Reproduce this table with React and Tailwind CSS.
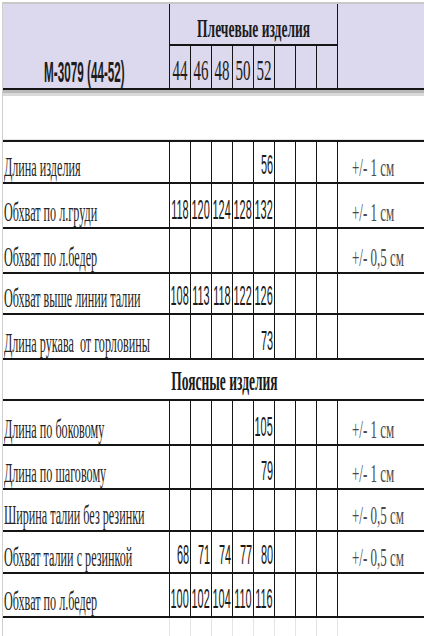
import React from "react";

const LINE = "border-[#151515]";

const rows = [
  { label: "Длина изделия", vals: ["", "", "", "", "56"], tol: "+/- 1 см", h: "h-[42px]" },
  { label: "Обхват по л.груди", vals: ["118", "120", "124", "128", "132"], tol: "+/- 1 см", h: "h-[45px]" },
  { label: "Обхват по л.бедер", vals: [], tol: "+/- 0,5 см", h: "h-[45px]" },
  { label: "Обхват выше линии талии", vals: ["108", "113", "118", "122", "126"], tol: "", h: "h-[41px]" },
  { label: "Длина рукава  от горловины", vals: ["", "", "", "", "73"], tol: "", h: "h-[45px]" },
  { section: "Поясные изделия", h: "h-[41px]" },
  { label: "Длина по боковому", vals: ["", "", "", "", "105"], tol: "+/- 1 см", h: "h-[45px]" },
  { label: "Длина по шаговому", vals: ["", "", "", "", "79"], tol: "+/- 1 см", h: "h-[44px]" },
  { label: "Ширина талии без резинки", vals: [], tol: "+/- 0,5 см", h: "h-[42px]" },
  { label: "Обхват талии с резинкой", vals: ["68", "71", "74", "77", "80"], tol: "+/- 0,5 см", h: "h-[42px]" },
  { label: "Обхват по л.бедер", vals: ["100", "102", "104", "110", "116"], tol: "", h: "h-[44px]" },
];

const cols = [0, 1, 2, 3, 4, 5, 6, 7];

function DataRow({ r }) {
  if (r.section) {
    return (
      <div className={`flex ${r.h} border-b-2 ${LINE} items-end justify-center pl-[22px] pb-[4px]`}>
        <span className="inline-block whitespace-nowrap origin-bottom scale-x-[0.5] text-[27px] leading-none font-bold text-[#1a1a1a] font-['Liberation_Serif','Times_New_Roman',serif]">
          {r.section}
        </span>
      </div>
    );
  }
  return (
    <div className={`flex ${r.h} border-b-2 ${LINE}`}>
      <div className="w-[166px] shrink-0 flex items-end pb-[1px] pl-[1px]">
        <span className="inline-block whitespace-pre origin-bottom-left scale-x-[0.45] text-[27px] leading-none text-[#262626] font-['Liberation_Serif','Times_New_Roman',serif]">
          {r.label}
        </span>
      </div>
      {cols.map((i) => (
        <div
          key={i}
          className={`w-[21px] shrink-0 border-l ${LINE} flex items-end justify-end pr-[1px] pb-[3px]`}
        >
          {r.vals[i] ? (
            <span className="inline-block whitespace-nowrap origin-bottom-right scale-x-[0.39] text-[28px] leading-none text-[#1a1a1a] font-['Liberation_Sans',Arial,sans-serif]">
              {r.vals[i]}
            </span>
          ) : null}
        </div>
      ))}
      <div className={`flex-1 border-l ${LINE} flex items-end pl-[14px] pb-[1px]`}>
        {r.tol ? (
          <span className="inline-block whitespace-nowrap origin-bottom-left scale-x-[0.5] text-[26px] leading-none text-[#4a4a4a] font-['Liberation_Serif','Times_New_Roman',serif]">
            {r.tol}
          </span>
        ) : null}
      </div>
    </div>
  );
}

export default function App() {
  const sizes = ["44", "46", "48", "50", "52", "", "", ""];
  return (
    <div className="w-[424px] h-[636px] bg-white overflow-hidden pt-[2px]">
      <div className="ml-[2px] border-l border-t-2 border-l-[#cfcfcf] border-t-[#c9c9c9]">
        {/* Header */}
        <div className={`flex h-[86px] bg-[#dcd8ed] border-b-2 ${LINE}`}>
          <div className="w-[166px] shrink-0 flex items-end justify-center pr-[4px] pb-[1px]">
            <span className="inline-block whitespace-nowrap origin-bottom scale-x-[0.39] text-[30px] leading-none font-bold text-[#1c1c1c] font-['Liberation_Sans',Arial,sans-serif]">
              М-3079 (44-52)
            </span>
          </div>
          <div className={`w-[168px] shrink-0 border-l ${LINE} flex flex-col`}>
            <div className={`h-[42px] border-b-2 ${LINE} flex items-end justify-center pb-[3px]`}>
              <span className="inline-block whitespace-nowrap origin-bottom scale-x-[0.54] text-[25px] leading-none font-bold text-[#1c1c1c] font-['Liberation_Serif','Times_New_Roman',serif]">
                Плечевые изделия
              </span>
            </div>
            <div className="flex flex-1">
              {sizes.map((s, i) => (
                <div
                  key={i}
                  className={
                    i === 0
                      ? "w-[20px] shrink-0 flex items-end justify-center pb-[3px]"
                      : `w-[21px] shrink-0 border-l ${LINE} flex items-end justify-center pb-[3px]`
                  }
                >
                  {s ? (
                    <span className="inline-block whitespace-nowrap origin-bottom scale-x-[0.5] text-[30px] leading-none text-[#1c1c1c] font-['Liberation_Serif','Times_New_Roman',serif]">
                      {s}
                    </span>
                  ) : null}
                </div>
              ))}
            </div>
          </div>
          <div className={`flex-1 border-l ${LINE}`} />
        </div>
        {/* gray band */}
        <div className="h-[3px] bg-[#b8b8b8]" />
        <div className="h-[3px] bg-[#dadada]" />
        {/* white gap */}
        <div className="h-[44px] border-b border-[#e6e6e6]" />
        {/* rows */}
        <div className={`border-t-2 ${LINE}`}>
          {rows.map((r, i) => (
            <DataRow key={i} r={r} />
          ))}
        </div>
        <div className="flex h-[20px]">
          <div className="w-[166px] shrink-0" />
          {cols.map((i) => (
            <div key={i} className="w-[21px] shrink-0 border-l border-[#e4e4e4]" />
          ))}
          <div className="flex-1 border-l border-[#e4e4e4]" />
        </div>
      </div>
    </div>
  );
}
